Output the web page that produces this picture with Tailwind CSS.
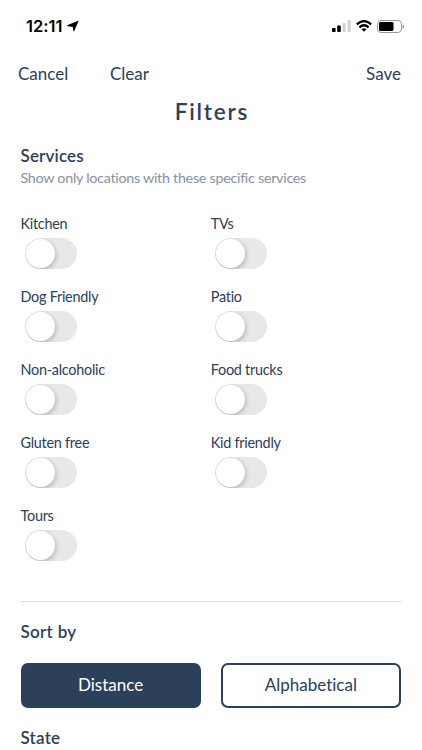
<!DOCTYPE html>
<html lang="en">
<head>
<meta charset="utf-8">
<title>Filters</title>
<script src="https://cdn.jsdelivr.net/npm/@tailwindcss/browser@4"></script>
</head>
<body class="h-[750px] w-[422px] overflow-hidden bg-white font-['Lato',sans-serif] text-[#2c405a] [font-variant-ligatures:none]">
<header>
  <div class="flex h-[52px] items-center justify-between pr-[18px] pl-[26px] text-black">
    <div class="flex items-center gap-[5px]">
      <span class="font-['Inter',sans-serif] text-[16.5px] leading-5 font-semibold">12:11</span>
      <svg class="h-[12px] w-[12px]" viewBox="0 0 12 12"><path d="M11.7 .6 7.3 11.1Q6.6 11.8 6.3 10.8L5.9 7 .8 6.3Q-.3 5.6.9 5Z" fill="#000"/></svg>
    </div>
    <div class="flex items-center gap-[5px]">
      <svg class="h-[12px] w-[19px]" viewBox="0 0 19 12"><rect y="8" width="3.6" height="4" rx=".8"/><rect x="5.2" y="5.6" width="3.6" height="6.4" rx=".8"/><g fill="#d4d4d4"><rect x="10.4" y="3" width="3.4" height="9" rx=".8"/><rect x="15.5" width="3.4" height="12" rx=".8"/></g></svg>
      <svg class="h-[12px] w-[16px]" viewBox="0 0 16 12"><g fill="none" stroke="#000" stroke-width="2.3"><path d="M.8 4.4Q8-2.2 15.2 4.4"/><path d="M3.4 7.3Q8 3.1 12.6 7.3"/></g><path d="M5.5 9.2Q8 7.3 10.5 9.2L8 11.8Z"/></svg>
      <svg class="h-[13px] w-[27px]" viewBox="0 0 27 13"><rect x=".5" y=".5" width="24" height="12" rx="3.5" fill="none" stroke="#999"/><rect x="2" y="2" width="14.5" height="9" rx="1.6"/><path d="M25.7 4.5Q27 5.1 27 6.5T25.7 8.5Z" fill="#888"/></svg>
    </div>
  </div>
  <nav class="flex h-[44px] items-center pr-[21px] pl-[18px] text-[17px]">
    <button class="w-[92px] text-left">Cancel</button>
    <button>Clear</button>
    <button class="ml-auto">Save</button>
  </nav>
  <h1 class="h-8 pl-[2px] text-center text-[22.5px] leading-8 font-semibold tracking-[1.8px]">Filters</h1>
</header>
<main class="pt-[18px] pr-[21px] pl-[20.5px]">
  <section>
    <h2 class="h-5 text-[17px] leading-5 font-semibold tracking-[0.15px]">Services</h2>
    <p class="mt-[2px] h-5 text-[14.3px] leading-5 tracking-[-0.27px] whitespace-nowrap text-[#8792a0]">Show only locations with these specific services</p>
    <div class="mt-[26px] grid auto-rows-[73px] grid-cols-2 text-[14.4px] leading-5 tracking-[-0.25px]">
      <label>Kitchen<span class="mt-[4px] ml-[4px] block h-[31px] w-[52px] overflow-hidden rounded-full bg-[#e8e8ea] p-px"><span class="block size-[29px] rounded-full bg-white shadow-[1px_2px_5px_#0000003a]"></span></span></label>
      <label>TVs<span class="mt-[4px] ml-[4px] block h-[31px] w-[52px] overflow-hidden rounded-full bg-[#e8e8ea] p-px"><span class="block size-[29px] rounded-full bg-white shadow-[1px_2px_5px_#0000003a]"></span></span></label>
      <label>Dog Friendly<span class="mt-[4px] ml-[4px] block h-[31px] w-[52px] overflow-hidden rounded-full bg-[#e8e8ea] p-px"><span class="block size-[29px] rounded-full bg-white shadow-[1px_2px_5px_#0000003a]"></span></span></label>
      <label>Patio<span class="mt-[4px] ml-[4px] block h-[31px] w-[52px] overflow-hidden rounded-full bg-[#e8e8ea] p-px"><span class="block size-[29px] rounded-full bg-white shadow-[1px_2px_5px_#0000003a]"></span></span></label>
      <label>Non-alcoholic<span class="mt-[4px] ml-[4px] block h-[31px] w-[52px] overflow-hidden rounded-full bg-[#e8e8ea] p-px"><span class="block size-[29px] rounded-full bg-white shadow-[1px_2px_5px_#0000003a]"></span></span></label>
      <label>Food trucks<span class="mt-[4px] ml-[4px] block h-[31px] w-[52px] overflow-hidden rounded-full bg-[#e8e8ea] p-px"><span class="block size-[29px] rounded-full bg-white shadow-[1px_2px_5px_#0000003a]"></span></span></label>
      <label>Gluten free<span class="mt-[4px] ml-[4px] block h-[31px] w-[52px] overflow-hidden rounded-full bg-[#e8e8ea] p-px"><span class="block size-[29px] rounded-full bg-white shadow-[1px_2px_5px_#0000003a]"></span></span></label>
      <label>Kid friendly<span class="mt-[4px] ml-[4px] block h-[31px] w-[52px] overflow-hidden rounded-full bg-[#e8e8ea] p-px"><span class="block size-[29px] rounded-full bg-white shadow-[1px_2px_5px_#0000003a]"></span></span></label>
      <label>Tours<span class="mt-[4px] ml-[4px] block h-[31px] w-[52px] overflow-hidden rounded-full bg-[#e8e8ea] p-px"><span class="block size-[29px] rounded-full bg-white shadow-[1px_2px_5px_#0000003a]"></span></span></label>
    </div>
  </section>
  <section class="mt-[22px] border-t border-[#d9dbdd] pt-[20px]">
    <h2 class="h-5 text-[17px] leading-5 font-semibold tracking-[0.3px]">Sort by</h2>
    <div class="mt-[21px] grid h-[45px] grid-cols-2 gap-5 text-[17px]">
      <button class="rounded-[7px] bg-[#2c405a] pb-px text-white">Distance</button>
      <button class="rounded-[7px] border-2 border-[#2c405a] pb-px">Alphabetical</button>
    </div>
  </section>
  <h2 class="mt-[20px] h-5 text-[17px] leading-5 font-semibold tracking-[0.2px]">State</h2>
</main>
</body>
</html>
